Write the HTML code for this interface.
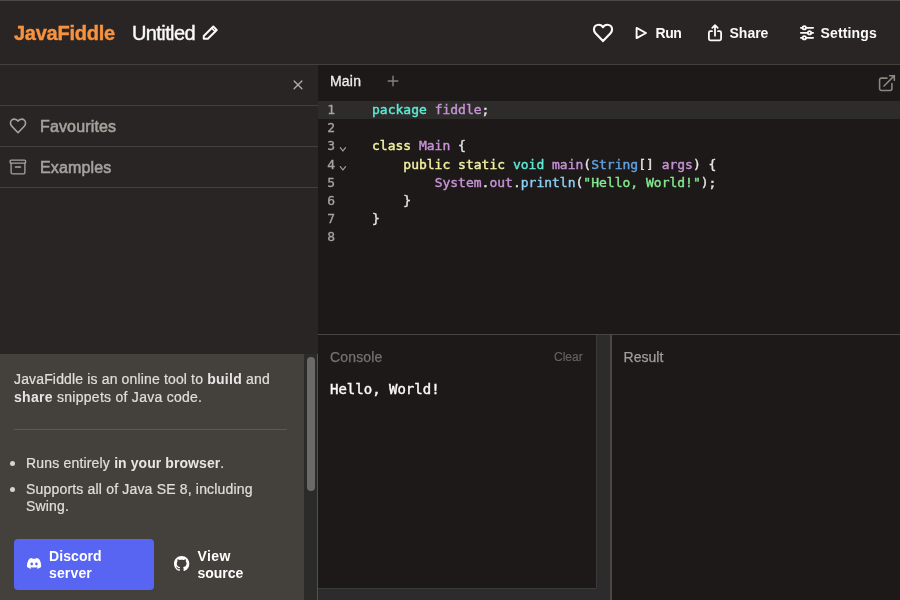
<!DOCTYPE html>
<html lang="en">
<head>
<meta charset="utf-8">
<title>JavaFiddle</title>
<style>
*{box-sizing:border-box;margin:0;padding:0}
html,body{width:900px;height:600px;overflow:hidden;background:#1d1918}
body{position:relative;font-family:"Liberation Sans",sans-serif;color:#e7e5e4;-webkit-font-smoothing:antialiased}
#app{position:absolute;left:0;top:0;width:900px;height:600px;will-change:transform}
.abs{position:absolute}
.t{position:absolute;white-space:nowrap;line-height:1}
svg{position:absolute;overflow:visible}
.mono{font-family:"DejaVu Sans Mono","Liberation Mono",monospace}

/* window top edge */
#topedge{left:0;top:0;width:900px;height:1px;background:#4a4a48;z-index:5}

/* header */
#header{left:0;top:0;width:900px;height:65px;background:#292524;border-bottom:1px solid #44403c}
#logo{left:14px;top:23px;font-size:20px;font-weight:700;color:#f8923f;letter-spacing:-0.25px;-webkit-text-stroke:0.4px #f8923f}
#title{left:132px;top:23px;font-size:20px;color:#fafaf9;letter-spacing:-0.6px;-webkit-text-stroke:0.4px #fafaf9}
.hbtn{font-size:14px;font-weight:700;color:#fafaf9;top:26px}

/* sidebar */
#sidebar{left:0;top:65px;width:318px;height:535px;background:#292524}
.sline{left:0;width:318px;height:1px;background:#44403c}
.srow{font-size:16px;color:#a8a29e;left:40px;-webkit-text-stroke:0.55px #a8a29e}

/* info panel */
#info{left:0;top:354px;width:304px;height:246px;background:#44403c;color:#e0ddda;font-size:14px}
#sbtrack{left:304px;top:354px;width:14px;height:246px;background:#2b2b2a;border-right:1px solid #545251}
#sbthumb{left:307px;top:357px;width:8px;height:134px;border-radius:4px;background:#6a6a6a}
#info .t{letter-spacing:0.18px;-webkit-text-stroke-width:0.2px}
#info .t b{font-weight:700;color:#e7e5e4;letter-spacing:0.3px;-webkit-text-stroke-width:0}
#hr{left:14px;top:429px;width:273px;height:1px;background:#5c5853}
.bullet{width:5px;height:5px;border-radius:50%;background:#d6d3d1;left:10px}
#discord{left:14px;top:539px;width:140px;height:51px;border-radius:4px;background:#5865f2}
.btxt{font-size:14px;font-weight:700;color:#fff}

/* editor */
#editor{left:318px;top:65px;width:582px;height:269px;background:#1d1918}
#activeline{left:318px;top:101px;width:582px;height:18px;background:#2d2c2a}
.ln{font-size:13px;color:#a8a29e;left:327.3px;line-height:18px;-webkit-text-stroke-width:0.3px}
.cl{font-size:13px;left:372px;line-height:18px;color:#e4e4e4;white-space:pre;-webkit-text-stroke-width:0.4px}
.k1{color:#5eead4}.k2{color:#c792d6}.k3{color:#f3f1a2}.k4{color:#5fa0e0}.k5{color:#8ccff5}.k6{color:#84e88f}

/* bottom panes */
#hsplit{left:318px;top:334px;width:582px;height:1px;background:#494542}
#console{left:318px;top:335px;width:292px;height:265px;background:#1d1918}
#vsb{left:596px;top:335px;width:14px;height:253px;background:#2c2c2c;border-left:1px solid #3c3a39}
#sbcorner{left:596px;top:588px;width:14px;height:12px;background:#2c2c2c}
#hsb{left:318px;top:588px;width:278px;height:12px;background:#2c2c2c;border-top:1px solid #3c3a39}
#vsplit{left:610px;top:335px;width:2px;height:265px;background:#4a4643}
#result{left:612px;top:335px;width:288px;height:265px;background:#1d1918}
</style>
</head>
<body>
<div id="app">

<div id="header" class="abs"></div>
<div id="topedge" class="abs"></div>
<div id="logo" class="t">JavaFiddle</div>
<div id="title" class="t">Untitled</div>

<!-- pencil -->
<svg id="i-pencil" style="left:196px;top:18px" width="30" height="30" viewBox="196 18 30 30" fill="none" stroke="#fafaf9" stroke-width="1.95" stroke-linejoin="round" stroke-linecap="round">
  <path d="M213.3 26.5 L216.75 29.95 L207.9 38.8 L203.75 38.8 L203.75 36.05 Z"/>
  <path d="M211.7 28.1 L215.15 31.55" stroke-width="1.5"/>
</svg>

<!-- header heart -->
<svg id="i-heart" style="left:590.9px;top:20.6px" width="24" height="24" viewBox="0 0 24 24" fill="none" stroke="#fafaf9" stroke-width="2.15" stroke-linejoin="round" stroke-linecap="round">
  <path d="M12 20.1L4.5 12.2C3.5 11.1 2.95 9.8 2.95 8.4C2.95 5.8 5 3.75 7.6 3.75C9.5 3.75 11.2 4.7 12 6.25C12.8 4.7 14.5 3.75 16.4 3.75C19 3.75 21.05 5.8 21.05 8.4C21.05 9.8 20.5 11.1 19.5 12.2Z"/>
</svg>

<!-- play -->
<svg id="i-play" style="left:626px;top:18px" width="30" height="30" viewBox="626 18 30 30" fill="none" stroke="#fafaf9" stroke-width="1.9" stroke-linejoin="round">
  <path d="M636.6 27.9 L646 33 L636.6 38.1 Z"/>
</svg>
<div class="t hbtn" style="left:655.5px;letter-spacing:-0.4px">Run</div>

<!-- share -->
<svg id="i-share" style="left:700px;top:18px" width="30" height="30" viewBox="700 18 30 30" fill="none" stroke="#fafaf9" stroke-width="1.8" stroke-linejoin="round" stroke-linecap="round">
  <path d="M718 31.2 H719.6 a1.5 1.5 0 0 1 1.5 1.5 V38.8 a1.5 1.5 0 0 1 -1.5 1.5 H710.4 a1.5 1.5 0 0 1 -1.5 -1.5 V32.7 a1.5 1.5 0 0 1 1.5 -1.5 H712"/>
  <path d="M712.3 27.9 L715 25.2 L717.7 27.9 M715 25.6 V35.8"/>
</svg>
<div class="t hbtn" style="left:729.5px">Share</div>

<!-- settings -->
<svg id="i-settings" style="left:792px;top:18px" width="30" height="30" viewBox="792 18 30 30" fill="none" stroke="#fafaf9" stroke-width="1.75" stroke-linecap="round">
  <path d="M800.85 27.75 H802.5 M806.1 27.75 H813.15 M800.85 32.75 H807.7 M811.3 32.75 H813.15 M800.85 37.75 H802.5 M806.1 37.75 H813.15"/>
  <circle cx="804.3" cy="27.75" r="1.7"/><circle cx="809.5" cy="32.75" r="1.7"/><circle cx="804.3" cy="37.75" r="1.7"/>
</svg>
<div class="t hbtn" style="left:820.5px;letter-spacing:0.15px">Settings</div>

<!-- sidebar -->
<div id="sidebar" class="abs"></div>
<svg id="i-close" style="left:283px;top:70px" width="30" height="30" viewBox="283 70 30 30" fill="none" stroke="#b3aeaa" stroke-width="1.3" stroke-linecap="round">
  <path d="M294.1 81 L301.9 88.8 M301.9 81 L294.1 88.8"/>
</svg>
<div class="abs sline" style="top:105px"></div>
<div class="abs sline" style="top:146px"></div>
<div class="abs sline" style="top:187px"></div>

<svg id="i-fav" style="left:7.85px;top:115.9px" width="20" height="20" viewBox="0 0 24 24" fill="none" stroke="#a8a29e" stroke-width="1.9" stroke-linejoin="round" stroke-linecap="round">
  <path d="M12 20.1L4.5 12.2C3.5 11.1 2.95 9.8 2.95 8.4C2.95 5.8 5 3.75 7.6 3.75C9.5 3.75 11.2 4.7 12 6.25C12.8 4.7 14.5 3.75 16.4 3.75C19 3.75 21.05 5.8 21.05 8.4C21.05 9.8 20.5 11.1 19.5 12.2Z"/>
</svg>
<div class="t srow" style="top:119px;letter-spacing:0.15px">Favourites</div>

<svg id="i-archive" style="left:3px;top:152px" width="30" height="30" viewBox="3 152 30 30" fill="none" stroke="#a8a29e" stroke-width="1.3" stroke-linejoin="round" stroke-linecap="round">
  <rect x="10.1" y="160.1" width="15.5" height="3.1" rx="1"/>
  <path d="M11.1 163.2 V172.4 a1.5 1.5 0 0 0 1.5 1.5 H23.4 a1.5 1.5 0 0 0 1.5 -1.5 V163.2"/>
  <path d="M15.4 167 H20.6"/>
</svg>
<div class="t srow" style="top:160px;letter-spacing:0.15px">Examples</div>

<!-- info panel -->
<div id="info" class="abs">
  <div class="t" style="left:14px;top:18px;letter-spacing:0.15px">JavaFiddle is an online tool to <b>build</b> and</div>
  <div class="t" style="left:14px;top:36px;letter-spacing:0.27px"><b>share</b> snippets of Java code.</div>
  <div class="t" style="left:26px;top:102px">Runs entirely <b style="letter-spacing:0.08px">in your browser</b>.</div>
  <div class="t" style="left:26px;top:128px">Supports all of Java SE 8, including</div>
  <div class="t" style="left:26px;top:145px">Swing.</div>
</div>
<div id="hr" class="abs"></div>
<div class="abs bullet" style="top:461px"></div>
<div class="abs bullet" style="top:487px"></div>
<div id="sbtrack" class="abs"></div>
<div id="sbthumb" class="abs"></div>

<div id="discord" class="abs"></div>
<svg id="i-discord" style="left:26.7px;top:557.8px" width="14.2" height="10.9" viewBox="0 0 127.14 96.36" fill="#fff" stroke="none">
  <path d="M107.7,8.07A105.15,105.15,0,0,0,81.47,0a72.06,72.06,0,0,0-3.36,6.83A97.68,97.68,0,0,0,49,6.83,72.37,72.37,0,0,0,45.64,0,105.89,105.89,0,0,0,19.39,8.09C2.79,32.65-1.71,56.6.54,80.21h0A105.73,105.73,0,0,0,32.71,96.36,77.7,77.7,0,0,0,39.6,85.25a68.42,68.42,0,0,1-10.85-5.18c.91-.66,1.8-1.34,2.66-2a75.57,75.57,0,0,0,64.32,0c.87.71,1.76,1.39,2.66,2a68.68,68.68,0,0,1-10.87,5.19,77,77,0,0,0,6.89,11.1A105.25,105.25,0,0,0,126.6,80.22h0C129.24,52.84,122.09,29.11,107.7,8.07ZM42.45,65.69C36.18,65.69,31,60,31,53s5-12.74,11.43-12.74S54,46,53.89,53,48.84,65.69,42.45,65.69Zm42.24,0C78.41,65.69,73.25,60,73.25,53s5-12.74,11.44-12.74S96.23,46,96.12,53,91.08,65.69,84.69,65.69Z"/>
</svg>
<div class="t btxt" style="left:49px;top:549px;letter-spacing:0.08px">Discord</div>
<div class="t btxt" style="left:49px;top:566px;letter-spacing:0.15px">server</div>

<svg id="i-github" style="left:174px;top:556.3px" width="15.3" height="15.3" viewBox="0 0 16 16" fill="#fff" stroke="none">
  <path d="M8 0C3.58 0 0 3.58 0 8c0 3.54 2.29 6.53 5.47 7.59.4.07.55-.17.55-.38 0-.19-.01-.82-.01-1.49-2.01.37-2.53-.49-2.69-.94-.09-.23-.48-.94-.82-1.13-.28-.15-.68-.52-.01-.53.63-.01 1.08.58 1.23.82.72 1.21 1.87.87 2.33.66.07-.52.28-.87.51-1.07-1.78-.2-3.64-.89-3.64-3.95 0-.87.31-1.59.82-2.15-.08-.2-.36-1.02.08-2.12 0 0 .67-.21 2.2.82.64-.18 1.32-.27 2-.27s1.36.09 2 .27c1.53-1.04 2.2-.82 2.2-.82.44 1.1.16 1.92.08 2.12.51.56.82 1.27.82 2.15 0 3.07-1.87 3.75-3.65 3.95.29.25.54.73.54 1.48 0 1.07-.01 1.93-.01 2.2 0 .21.15.46.55.38A8.01 8.01 0 0 0 16 8c0-4.42-3.58-8-8-8z"/>
</svg>
<div class="t btxt" style="left:197.4px;top:549px;letter-spacing:0.45px">View</div>
<div class="t btxt" style="left:197.4px;top:566px">source</div>

<!-- editor -->
<div id="editor" class="abs"></div>
<div class="t" style="left:330px;top:74px;font-size:14px;color:#f0efee;letter-spacing:0.2px;-webkit-text-stroke-width:0.3px">Main</div>
<svg id="i-plus" style="left:378px;top:66px" width="30" height="30" viewBox="378 66 30 30" fill="none" stroke="#85807b" stroke-width="1.4" stroke-linecap="round">
  <path d="M393 76.2 V85.8 M388.2 81 H397.8"/>
</svg>
<svg id="i-open" style="left:877px;top:73px" width="20" height="20" viewBox="0 0 24 24" fill="none" stroke="#8b8682" stroke-width="1.9" stroke-linecap="round" stroke-linejoin="round">
  <path d="M12 6.1H5.3A2.2 2.2 0 003.1 8.3v10.4A2.2 2.2 0 005.3 20.9h10.4A2.2 2.2 0 0017.9 18.7V12.6M8.4 15.6L20.8 3.2m0 0h-5.6M20.8 3.2v5.6"/>
</svg>

<div id="activeline" class="abs"></div>
<div class="t mono ln" style="top:101px">1</div>
<div class="t mono ln" style="top:119px">2</div>
<div class="t mono ln" style="top:137px">3</div>
<div class="t mono ln" style="top:156px">4</div>
<div class="t mono ln" style="top:174px">5</div>
<div class="t mono ln" style="top:192px">6</div>
<div class="t mono ln" style="top:210px">7</div>
<div class="t mono ln" style="top:228px">8</div>
<svg id="i-fold" style="left:322px;top:134px" width="40" height="40" viewBox="322 134 40 40" fill="none" stroke="#a8a29e" stroke-width="1.2" stroke-linecap="round" stroke-linejoin="round">
  <path d="M340.3 147.7 L342.9 151 L345.5 147.7 M340.3 166.7 L342.9 170 L345.5 166.7"/>
</svg>

<div class="t mono cl" style="top:101px"><span class="k1">package</span> <span class="k2">fiddle</span>;</div>
<div class="t mono cl" style="top:137px"><span class="k3">class</span> <span class="k2">Main</span> {</div>
<div class="t mono cl" style="top:156px">    <span class="k3">public</span> <span class="k3">static</span> <span class="k1">void</span> <span class="k2">main</span>(<span class="k4">String</span>[] <span class="k2">args</span>) {</div>
<div class="t mono cl" style="top:174px">        <span class="k2">System</span>.<span class="k2">out</span>.<span class="k5">println</span>(<span class="k6">"Hello, World!"</span>);</div>
<div class="t mono cl" style="top:192px">    }</div>
<div class="t mono cl" style="top:210px">}</div>

<!-- bottom panes -->
<div id="hsplit" class="abs"></div>
<div id="console" class="abs"></div>
<div class="t" style="left:330px;top:350px;font-size:14px;color:#78716c;letter-spacing:0.17px;-webkit-text-stroke-width:0.25px">Console</div>
<div class="t" style="left:554px;top:351px;font-size:12px;color:#65605b;-webkit-text-stroke-width:0.2px">Clear</div>
<div class="t mono" style="left:330px;top:382px;font-size:14px;color:#fafaf9;-webkit-text-stroke-width:0.42px">Hello, World!</div>
<div id="vsb" class="abs"></div>
<div id="hsb" class="abs"></div>
<div id="sbcorner" class="abs"></div>
<div id="vsplit" class="abs"></div>
<div id="result" class="abs"></div>
<div class="t" style="left:623.6px;top:350px;font-size:14px;color:#a39d98;-webkit-text-stroke-width:0.25px">Result</div>

</div>
</body>
</html>
